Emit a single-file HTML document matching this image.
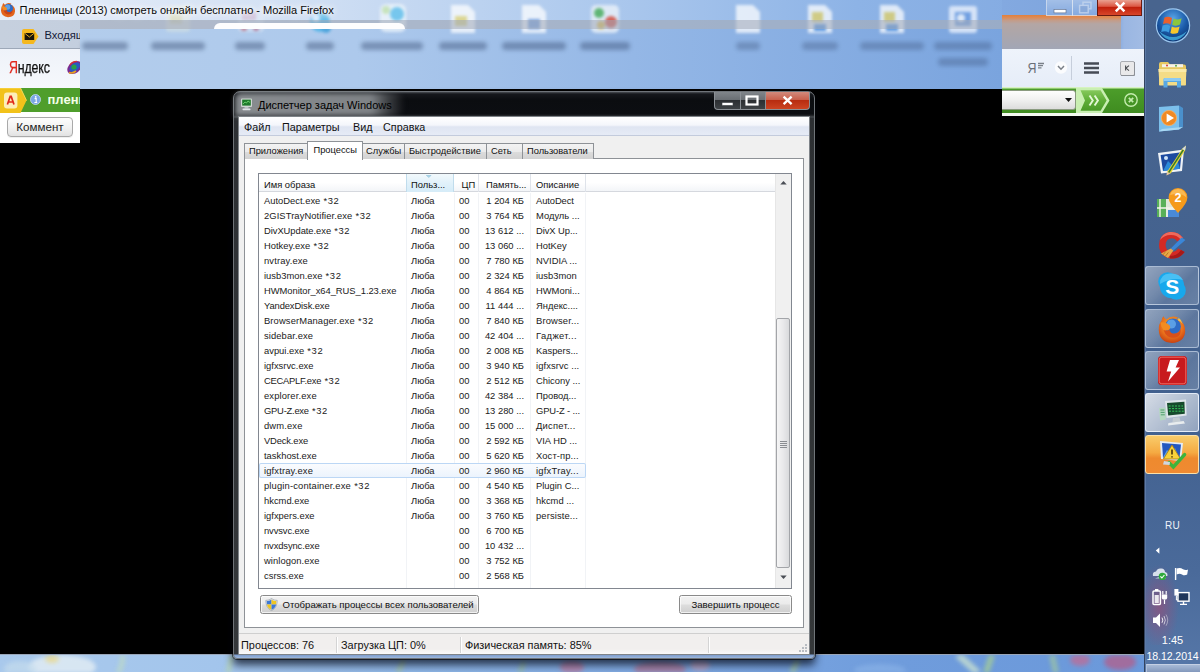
<!DOCTYPE html>
<html lang="ru">
<head>
<meta charset="utf-8">
<title>Диспетчер задач Windows</title>
<style>
*{box-sizing:border-box;margin:0;padding:0}
html,body{width:1200px;height:672px;overflow:hidden;background:#000}
body{position:relative;font-family:"Liberation Sans",sans-serif;font-size:10px;color:#111}
.abs{position:absolute}
/* ---------- desktop / wallpaper ---------- */
#wall{left:0;top:654px;width:1200px;height:18px;background:linear-gradient(90deg,#a9c9ec 0%,#a3c5ec 18%,#8fb7e8 35%,#7fa9e2 55%,#6f9cdc 75%,#6a98da 100%);border-top:1px solid #9aa6b8;overflow:hidden}
/* ---------- firefox ---------- */
#ffTitle{left:0;top:0;width:1143px;height:20px;background:linear-gradient(90deg,#e6eef9 0%,#d3e1f4 25%,#b0cbee 50%,#8db3e6 75%,#7ea6df 100%)}
#ffTabs{left:0;top:20px;width:1143px;height:29px;background:linear-gradient(90deg,#c6d0de 0%,#bccbe0 30%,#a3bcdd 60%,#89a9d6 100%)}
#ffNavL{left:0;top:49px;width:80px;height:39px;background:linear-gradient(180deg,#eef2f9,#f6f8fc)}
#ffGreenL{left:0;top:88px;width:80px;height:24px;background:#4f9e2c}
#ffBodyL{left:0;top:112px;width:80px;height:31px;background:#fff}
#glass{left:80px;top:29px;width:922px;height:60px;background:linear-gradient(90deg,#b3cdec 0%,#adc9ec 30%,#94b7e6 60%,#7aa4de 100%)}
/* ---------- firefox details ---------- */
#ffText{left:19.5px;top:3px;text-shadow:0 0 5px #fff,0 0 9px #fff,0 0 12px #fff;font-size:11.1px;line-height:14px;color:#0a0a0a;white-space:nowrap;letter-spacing:-.05px}
#ffTabLine{left:0;top:48px;width:80px;height:1px;background:#9da8b8}
#tabTxt{left:44.5px;top:27px;width:35.5px;overflow:hidden;font-size:11.2px;line-height:16px;color:#152038;white-space:nowrap}
#actTab{left:214px;top:23px;width:191px;height:6px;border-radius:8px 8px 0 0;background:#fdfdfe}
#ydx{left:9px;top:57px;font-size:16.5px;line-height:20px;color:#111;white-space:nowrap;transform:scaleX(.75);transform-origin:0 0;letter-spacing:-.2px;-webkit-text-stroke:.25px currentColor}
#ydx b{font-weight:normal;color:#e0261c}
#greenTxt{left:47.5px;top:91px;width:32.5px;overflow:hidden;font-size:13px;font-weight:bold;line-height:18px;color:#f4ffe8;white-space:nowrap}
#komm{left:7px;top:117px;width:66px;height:20px;border:1px solid #a9a9a9;border-radius:4px;background:linear-gradient(180deg,#fdfdfd 0%,#f1f1f1 55%,#e2e2e2 100%);font-size:11.6px;line-height:18px;text-align:center;color:#1c1c1c;box-shadow:0 1px 0 rgba(0,0,0,.06)}
.dlabel{height:8px;border-radius:4px;background:rgba(50,72,110,.42);filter:blur(2.2px)}
.dicon{filter:blur(1.8px);opacity:.9}
#ffRtop{left:1002px;top:0;width:142px;height:49px;background:linear-gradient(90deg,#83a9e0 0%,#7ca3dc 80%,#9ab6e2 86%,#a2bce4 100%)}
#ffRblur{left:1002px;top:15px;width:119px;height:34px;background:linear-gradient(180deg,#e2803c 0%,#dc8c58 8%,#c49c88 16%,#b4a6a4 26%,#aca6aa 55%,#a2a6b6 100%)}
#ffRnav{left:1002px;top:49px;width:142px;height:38px;background:linear-gradient(180deg,#eef3fb,#e6edf8)}
#ffRgreen{left:1002px;top:87px;width:142px;height:26px;background:linear-gradient(180deg,#d6f3c0 0px,#d6f3c0 1px,#4c9d2a 2px,#3f8c20 100%)}
#ffRwhite{left:1002px;top:113px;width:142px;height:3px;background:#f4faf0}
.fcap{top:0;height:16px;border:1px solid rgba(215,225,240,.7);border-top:none}
/* ---------- taskbar ---------- */
#taskbar{left:1145px;top:0;width:55px;height:672px;background:linear-gradient(180deg,#48648e 0%,#45638f 30%,#41608e 60%,#4a6a9a 85%,#5677a8 100%);border-left:1px solid #5c7aa6;box-shadow:-1px 0 0 #33435f}
.tbtn{left:1145px;width:54px;height:39px;border:1px solid rgba(214,226,244,.6);border-radius:3px;background:linear-gradient(135deg,rgba(255,255,255,.42) 0%,rgba(255,255,255,.26) 40%,rgba(255,255,255,.14) 60%,rgba(255,255,255,.2) 100%)}
.tbtn.hot{background:linear-gradient(180deg,#f9cc6a 0%,#f5aa42 45%,#ee8a2e 60%,#ef8a32 100%);border-color:#fbe0a8}
#tray{left:1145px;top:515px;width:55px;color:#fff;text-align:center;white-space:nowrap}
/* ---------- task manager ---------- */
#tm{left:233px;top:91px;width:582px;height:568px;border-radius:7px 7px 4px 4px;border:1px solid #6f7479;
 background:linear-gradient(180deg,#4a4e53 0px,#16181c 2px,#0b0d10 8px,#0c0e12 22px,#2a2d31 24px,#4a4e53 25px,#2c2f33 26px,#34373a 562px,#7d9ccc 563px,#9cb8de 566px,#86a4d0 568px);box-shadow:0 0 0 1px rgba(0,0,0,.55),0 6px 9px 0 rgba(0,5,20,.72)}
#tmGlow{left:235px;top:93px;width:170px;height:23px;background:linear-gradient(90deg,rgba(150,154,158,.9) 0%,rgba(140,144,148,.9) 80%,rgba(110,113,117,.5) 90%,rgba(0,0,0,0) 100%);border-radius:6px 10px 10px 0;filter:blur(2.5px)}
#tmTitle{left:258px;top:97px;font-size:11px;line-height:16px;color:#000;white-space:nowrap}
#tmIcon{left:240px;top:98px;width:14px;height:13px}
.cap{top:92px;height:18px;border:1px solid #8b9095;border-top:none}
#capMin{left:714px;width:27px;border-radius:0 0 0 4px;background:linear-gradient(180deg,#80858a 0%,#6a6f74 45%,#2c2f32 50%,#3e4245 100%)}
#capMax{left:740px;width:26px;background:linear-gradient(180deg,#80858a 0%,#6a6f74 45%,#2c2f32 50%,#3e4245 100%)}
#capClose{left:765px;width:45px;border-radius:0 0 4px 0;background:linear-gradient(180deg,#d28a7c 0%,#c8604c 45%,#b82c10 50%,#cc4422 100%)}
#tmClient{left:239px;top:117px;width:570px;height:537px;background:#f0f0f0;outline:1px solid #7f8489}
#tmMenu{left:239px;top:117px;width:570px;height:19px;background:linear-gradient(180deg,#ffffff 0%,#f4f6fb 45%,#dfe5f2 55%,#e6ebf6 100%);border-bottom:1px solid #c3cbdc;font-size:10.8px;line-height:19px;color:#111}
#tmMenu span{position:absolute;top:0.5px;white-space:nowrap}
.tab{top:143px;height:16px;border:1px solid #8e9297;border-bottom:none;background:linear-gradient(180deg,#f3f3f3 0%,#ebebeb 50%,#dddddd 51%,#d2d2d2 100%);font-size:9.3px;line-height:15px;text-align:left;padding-left:4px;white-space:nowrap;color:#111}
.tab.act{top:141px;height:19px;background:#fff;z-index:3;line-height:17px;padding-left:5.5px}
#tmPanel{left:244px;top:158px;width:560px;height:470px;background:#fff;border:1px solid #8e9297}
#list{left:258px;top:173px;width:534px;height:416px;background:#fff;border:1px solid #828790}
#hdr{left:259px;top:174px;width:516px;height:18px;background:linear-gradient(180deg,#ffffff 0%,#ffffff 50%,#f3f5f8 100%);border-bottom:1px solid #d5d8de;font-size:9.4px;line-height:18px}
#hdr span{position:absolute;top:1.5px;white-space:nowrap}
#hdrSort{left:406px;top:174px;width:48px;height:18px;background:linear-gradient(180deg,#f2f9fc 0%,#e1f1fa 50%,#d5ecf8 100%);border-left:1px solid #c0dcec;border-right:1px solid #c0dcec}
.hsep{top:174px;width:1px;height:18px;background:#dfe3ea}
.csep{top:193px;width:1px;height:395px;background:#f1f3f6}
#rows{left:259px;top:193px;width:516px;font-size:9.4px;line-height:15px;color:#1a1a1a}
.row{position:relative;height:15px;white-space:nowrap}
.row span{position:absolute;top:0}
.row .c1{left:5px}.row .c2{left:152px}.row .c3{left:200px}.row .c4{left:215px;width:50px;text-align:right}.row .c5{left:277px}
.row .w{position:static;margin-left:0;letter-spacing:.6px}
.row.sel{background:linear-gradient(180deg,#fbfcfe,#ebf3fd);box-shadow:inset 0 0 0 1px #bcd7f5;width:327px;border-radius:2px}
#sb{left:775px;top:174px;width:16px;height:414px;background:#f0f0f0;border-left:1px solid #e6e6e6}
#sbThumb{left:776px;top:318px;width:14px;height:250px;border:1px solid #a3a5a9;border-radius:2px;background:linear-gradient(90deg,#f5f5f5 0%,#e9e9eb 50%,#d9dadc 100%)}
.btn{top:595px;height:19px;border:1px solid #8a8a8a;border-radius:2.5px;background:linear-gradient(180deg,#f2f2f2 0%,#ebebeb 48%,#dddddd 52%,#cfcfcf 100%);box-shadow:inset 0 0 0 1px rgba(255,255,255,.7);font-size:9.6px;line-height:17px;white-space:nowrap;color:#111}
#status{left:239px;top:633px;width:570px;height:21px;background:linear-gradient(180deg,#f1efee 0%,#f1efee 75%,#fafafa 100%);border-top:1px solid #cfcfcf;font-size:10.9px;line-height:19px;color:#111}
#status span{position:absolute;top:1.5px;white-space:nowrap}
.ssep{top:637px;width:1px;height:16px;background:#d4d4d4;box-shadow:1px 0 0 #fff}
</style>
</head>
<body>
<div id="wall" class="abs"><svg width="1200" height="18" viewBox="0 0 1200 18" style="filter:blur(2.2px)">
<ellipse cx="62" cy="12" rx="34" ry="12" fill="#e4eef4" opacity=".8"/><ellipse cx="52" cy="4" rx="7" ry="4" fill="#e8d890" opacity=".8"/><ellipse cx="20" cy="14" rx="16" ry="8" fill="#c4dcec" opacity=".7"/>
<path d="M118 18 Q124 8 122 0" stroke="#bcd8c8" stroke-width="5" fill="none" opacity=".8"/><path d="M228 18 L232 0" stroke="#b8d6b0" stroke-width="5" opacity=".7"/>
<path d="M398 18 L404 4" stroke="#a8c8a0" stroke-width="5" opacity=".7"/><path d="M520 18 L524 6" stroke="#9cc0a0" stroke-width="5" opacity=".7"/>
<ellipse cx="572" cy="12" rx="12" ry="7" fill="#c07a9c" opacity=".7"/><ellipse cx="660" cy="14" rx="26" ry="8" fill="#b8708c" opacity=".65"/><ellipse cx="700" cy="10" rx="10" ry="6" fill="#d4a4b8" opacity=".6"/>
<path d="M792 18 L798 4" stroke="#a4c8a0" stroke-width="6" opacity=".7"/><ellipse cx="880" cy="15" rx="26" ry="6" fill="#8cb4e8" opacity=".6"/>
<path d="M958 0 L978 18" stroke="#c8e0d0" stroke-width="7" opacity=".8"/><path d="M992 0 L986 18" stroke="#a4cc98" stroke-width="6" opacity=".8"/><path d="M1052 0 L1056 18" stroke="#a0c8a0" stroke-width="6" opacity=".7"/>
<ellipse cx="1080" cy="5" rx="10" ry="6" fill="#c46890" opacity=".7"/><ellipse cx="1120" cy="7" rx="16" ry="8" fill="#b85a84" opacity=".7"/>
</svg></div>
<div id="ffTitle" class="abs"></div>
<div id="ffTabs" class="abs"></div>
<div id="ffNavL" class="abs"></div>
<div id="ffGreenL" class="abs"></div>
<div id="ffBodyL" class="abs"></div>
<div id="glass" class="abs"></div>
<!--GLASS-->
<div class="abs dicon" style="left:0;top:0;width:1002px;height:40px;overflow:hidden">
<svg width="1002" height="40" viewBox="0 0 1002 40">
<g opacity=".35"><rect x="166" y="6" width="24" height="26" rx="3" fill="#f4f3d8"/><rect x="170" y="14" width="12" height="10" fill="#e8d46a"/></g>
<g opacity=".5"><rect x="238" y="8" width="26" height="24" rx="4" fill="#e8eef8"/><circle cx="244" cy="28" r="3" fill="#d03030"/><circle cx="256" cy="28" r="3" fill="#c03048"/><rect x="242" y="12" width="14" height="8" fill="#d0a0c0"/></g>
<g opacity=".8"><circle cx="320" cy="22" r="10" fill="#38b0e8"/><circle cx="316" cy="18" r="4" fill="#d8f0ff"/><circle cx="326" cy="28" r="5" fill="#2a98d8"/></g>
<g opacity=".8"><rect x="380" y="4" width="26" height="28" rx="6" fill="#f2f8fc"/><circle cx="397" cy="14" r="7" fill="#58c0ec"/><circle cx="386" cy="10" r="4" fill="#c8e8a8"/></g>
<g opacity=".8"><path d="M451 5 H468 L475 12 V33 H451Z" fill="#ffffff"/><rect x="455" y="16" width="12" height="10" fill="#e8d870"/><path d="M522 5 H539 L546 12 V33 H522Z" fill="#ffffff"/><rect x="528" y="19" width="12" height="10" fill="#6a98dc"/></g>
<g opacity=".85"><rect x="591" y="5" width="28" height="28" rx="5" fill="#eef4fa"/><circle cx="599" cy="13" r="5" fill="#48b050"/><circle cx="611" cy="22" r="6" fill="#e04830"/><circle cx="601" cy="25" r="4" fill="#f0c030"/></g>
<g opacity=".8"><path d="M736 5 H753 L760 12 V33 H736Z" fill="#ffffff"/><path d="M808 5 H825 L832 12 V33 H808Z" fill="#ffffff"/><rect x="812" y="12" width="11" height="10" fill="#e8d460"/><rect x="814" y="24" width="12" height="7" fill="#4a90e0"/><path d="M880 5 H897 L904 12 V33 H880Z" fill="#ffffff"/><rect x="884" y="12" width="11" height="10" fill="#e8d460"/><rect x="886" y="24" width="12" height="7" fill="#4a90e0"/><rect x="949" y="6" width="28" height="27" rx="3" fill="#f4f8ff"/><rect x="955" y="12" width="16" height="14" fill="#6a9ae0"/><circle cx="961" cy="18" r="4" fill="#ffffff"/></g>
</svg></div>
<div class="abs" style="left:80px;top:20px;width:922px;height:9px;background:rgba(160,170,186,.55)"></div>
<div class="abs dlabel" style="left:82px;top:42px;width:46px;opacity:1"></div>
<div class="abs dlabel" style="left:151px;top:42px;width:54px;opacity:1"></div>
<div class="abs dlabel" style="left:235px;top:42px;width:30px;opacity:1"></div>
<div class="abs dlabel" style="left:306px;top:42px;width:28px;opacity:1"></div>
<div class="abs dlabel" style="left:361px;top:42px;width:62px;opacity:1"></div>
<div class="abs dlabel" style="left:439px;top:42px;width:48px;opacity:1"></div>
<div class="abs dlabel" style="left:502px;top:42px;width:64px;opacity:1"></div>
<div class="abs dlabel" style="left:580px;top:42px;width:50px;opacity:1"></div>
<div class="abs dlabel" style="left:736px;top:42px;width:24px;opacity:0.75"></div>
<div class="abs dlabel" style="left:802px;top:42px;width:36px;opacity:0.75"></div>
<div class="abs dlabel" style="left:860px;top:42px;width:64px;opacity:0.75"></div>
<div class="abs dlabel" style="left:934px;top:42px;width:58px;opacity:0.75"></div>
<div class="abs dlabel" style="left:938px;top:58px;width:50px;opacity:.75"></div>
<!--/GLASS-->

<!--FF-->
<div id="ffText" class="abs">Пленницы (2013) смотреть онлайн бесплатно - Mozilla Firefox</div>
<svg class="abs" style="left:0;top:1px" width="16" height="17" viewBox="0 0 30 31"><path d="M6.4 3.2 Q7.6 5.6 9.4 6.4 Q14.6 1.4 21.6 4.8 Q20 4.8 19.4 5.6 Q28.6 9.2 28.2 18.6 Q27.4 29.6 15 30 Q2.6 29.6 1.8 17.6 Q1.4 11 4.6 7.6 Q4.8 5 6.4 3.2Z" fill="#e2641c"/><circle cx="16" cy="13.4" r="8.4" fill="#2f6cc6"/><circle cx="14.4" cy="11" r="4.8" fill="#5b9fe6"/><path d="M3.4 9.6 Q8 8.6 11.6 11.6 Q14.4 13.6 12.4 16.4 Q10 18.4 6.6 17 Q3.8 14 3.4 9.6Z" fill="#f28c22"/><path d="M12.4 16.4 Q13 20.6 18 20.6 Q22.4 20 23.4 16 Q24.6 20.6 21 23.4 Q16 26 11 23.4 Q7.6 21 6.6 17 Q10 18.4 12.4 16.4Z" fill="#c8441a"/></svg>
<div id="ffTabLine" class="abs"></div>
<svg class="abs" style="left:21px;top:28px" width="19" height="17" viewBox="0 0 19 17"><path d="M3 1 H12.5 L17.5 8.5 L12.5 16 H3 Q1 16 1 14 V3 Q1 1 3 1Z" fill="#f5b81e"/><rect x="3.6" y="5" width="9.6" height="7" fill="#1a1408"/><path d="M3.8 5.3 L8.4 9 L13 5.3" stroke="#f5b81e" stroke-width=".9" fill="none"/></svg>
<div id="tabTxt" class="abs">Входящие</div>
<div id="actTab" class="abs"></div>
<div id="ydx" class="abs"><b>Я</b>ндекс</div>
<svg class="abs" style="left:66px;top:59px" width="14" height="17" viewBox="0 0 14 17"><ellipse cx="8.5" cy="8.5" rx="8" ry="5.6" transform="rotate(-38 8.5 8.5)" fill="#7a2a90"/><ellipse cx="8.8" cy="8.2" rx="6" ry="3.8" transform="rotate(-38 8.8 8.2)" fill="#2a58c0"/><circle cx="8" cy="8" r="2.6" fill="#28a04a"/><path d="M3 13.5 Q6 15 10 12" stroke="#e8a020" stroke-width="1.6" fill="none"/><path d="M4 6 Q6 2.6 11 2.4" stroke="#d83030" stroke-width="1.4" fill="none"/></svg>
<svg class="abs" style="left:0;top:88px" width="29" height="25" viewBox="0 0 29 25"><path d="M0 0 H20.5 L26.5 12.5 L20.5 25 H0Z" fill="#f2c21a"/><path d="M0 0 H20.5 L26.5 12.5" fill="none" stroke="#f7d95a" stroke-width="1"/><rect x="4" y="4.4" width="13.4" height="16.2" rx="3" fill="#fdeeb8"/><path d="M7.4 16.6 L10.2 8.4 H11.2 L14 16.6 M8.4 14 H13" stroke="#e0281a" stroke-width="1.7" fill="none"/></svg>
<svg class="abs" style="left:30px;top:94px" width="11" height="11" viewBox="0 0 11 11"><circle cx="5.5" cy="5.5" r="5" fill="#7aa6e4" stroke="#c9dcf6" stroke-width=".8"/><circle cx="5.7" cy="2.9" r=".9" fill="#fff"/><path d="M4.6 4.6 H6.2 V8.4 M4.4 8.5 H7.2" stroke="#fff" stroke-width="1.1" fill="none"/></svg>
<div id="greenTxt" class="abs">пленницы</div>
<div id="komm" class="abs">Коммент</div>
<!--/FF-->


<!--FFR-->
<div id="ffRtop" class="abs"></div>
<div id="ffRblur" class="abs"></div>
<div class="abs fcap" style="left:1046px;width:27px;background:linear-gradient(180deg,rgba(255,255,255,.28),rgba(255,255,255,.05))"></div>
<div class="abs fcap" style="left:1072px;width:26px;background:linear-gradient(180deg,rgba(255,255,255,.28),rgba(255,255,255,.05))"></div>
<div class="abs fcap" style="left:1097px;width:45px;border-color:#6a1a10;background:linear-gradient(180deg,#e9a090 0%,#dc5844 42%,#c0200c 50%,#d8462a 100%)"></div>
<svg class="abs" style="left:1046px;top:0" width="96" height="16" viewBox="0 0 96 16"><rect x="8" y="9.5" width="12" height="3.4" fill="#fff" stroke="#5a6a88" stroke-width=".6"/><g opacity=".8"><rect x="37" y="2.2" width="8" height="6.6" fill="none" stroke="#c6d6ee" stroke-width="1.4"/><rect x="33.6" y="5.4" width="8.6" height="7.4" fill="#88a8d8" stroke="#c6d6ee" stroke-width="1.4"/></g><path d="M69.8 2.6 L78.4 11.4 M78.4 2.6 L69.8 11.4" stroke="#fff" stroke-width="2.5"/></svg>
<div id="ffRnav" class="abs"></div>
<svg class="abs" style="left:1024px;top:56px" width="116" height="24" viewBox="0 0 116 24"><text x="3.5" y="17" font-family="Liberation Sans, sans-serif" font-size="14.5" fill="#6a6f78" textLength="9" lengthAdjust="spacingAndGlyphs">Я</text><path d="M14 7.5 H20 M14 9.7 H19 M14 11.9 H17.5" stroke="#7a8088" stroke-width="1.3"/><circle cx="37" cy="11.5" r="6.2" fill="#fbfcfe"/><path d="M34 10 L37 13.2 L40 10" stroke="#7a8088" stroke-width="1.5" fill="none"/><path d="M47.5 0 V24" stroke="#c6cedb" stroke-width="1"/><path d="M60 7.5 H75 M60 12 H75 M60 16.5 H75" stroke="#464b55" stroke-width="2.4"/><rect x="96.5" y="5.5" width="14" height="14" rx="1.5" fill="#e9e9ea" stroke="#a9acb2"/><path d="M97 19.5 H110.5 V6" stroke="#8c9096" stroke-width="1" fill="none"/><path d="M101.6 9.6 V14.6 M105 9.6 L102 12.1 L105 14.6" stroke="#4a4d52" stroke-width="1.1" fill="none"/></svg>
<div id="ffRgreen" class="abs"></div>
<div id="ffRwhite" class="abs"></div>
<div class="abs" style="left:1002px;top:90px;width:74px;height:20px;border:1px solid #8a9a80;border-left:none;border-radius:0 3px 3px 0;background:linear-gradient(180deg,#fefefe 0%,#f0f0f0 50%,#dcdcdc 100%)"></div>
<div class="abs" style="left:1076px;top:88px;width:8px;height:24px;background:#c9efb2"></div>
<svg class="abs" style="left:1062px;top:88px" width="82" height="25" viewBox="0 0 82 25"><defs><linearGradient id="ga" x1="0" y1="0" x2="0" y2="1"><stop offset="0" stop-color="#86c95c"/><stop offset=".5" stop-color="#5fae38"/><stop offset="1" stop-color="#4a9a28"/></linearGradient></defs><path d="M3 10 H10 L6.5 14Z" fill="#111"/><path d="M14 0 H40 L47.5 12.5 L40 25 H14Z" fill="#c9efb2"/><path d="M18.5 2.2 H38.6 L44.6 12.5 L38.6 22.8 H18.5 L23 12.5Z" fill="url(#ga)"/><path d="M27.5 7.5 L30.8 12.5 L27.5 17.5 M32.6 7.5 L35.9 12.5 L32.6 17.5" stroke="#e4f8d6" stroke-width="1.9" fill="none"/><circle cx="69" cy="12" r="6.2" fill="none" stroke="#c4ecae" stroke-width="1.4"/><path d="M66.8 9.8 L71.2 14.2 M71.2 9.8 L66.8 14.2" stroke="#c4ecae" stroke-width="1.7"/></svg>
<!--/FFR-->
<div id="taskbar" class="abs"></div>
<!--TB-->
<div class="abs" style="left:1145px;top:560px;width:40px;height:85px;background:radial-gradient(ellipse 50% 50% at 35% 55%,rgba(170,70,110,.55),rgba(170,70,110,0) 100%)"></div>
<svg class="abs" style="left:1154px;top:7px" width="38" height="38" viewBox="0 0 38 38"><defs><radialGradient id="orb" cx=".5" cy=".3" r=".75"><stop offset="0" stop-color="#5aa6e8"/><stop offset=".55" stop-color="#1a5aa8"/><stop offset="1" stop-color="#0c2c66"/></radialGradient></defs><circle cx="19" cy="18.5" r="16.6" fill="url(#orb)" stroke="#9cc8f0" stroke-width="1.2"/><path d="M5 24 Q19 36 33 24 Q28 33 19 33.6 Q10 33 5 24Z" fill="#4cc0f0" opacity=".7"/><path d="M10.5 10.5 Q14 8.6 18 11 L16.6 17.4 Q13 15.4 9 17Z" fill="#e8602c"/><path d="M19.6 11.6 Q23.6 13.6 27.6 11.2 L26 17.6 Q22 19.8 18.2 17.8Z" fill="#8cc63c"/><path d="M8.6 18.6 Q12.6 16.8 16.2 19 L14.8 25.4 Q11.4 23.4 7.2 25Z" fill="#3c9ce0"/><path d="M17.8 19.6 Q21.6 21.6 25.6 19.4 L24 25.8 Q20.2 27.8 16.4 26Z" fill="#f8c62c"/></svg>
<svg class="abs" style="left:1157px;top:60px" width="32" height="30" viewBox="0 0 32 30"><path d="M2 4 Q2 2 4 2 H11 L13 4.5 H27 Q29 4.5 29 6.5 V25 H2Z" fill="#e8c860"/><rect x="5" y="4.2" width="21" height="3" fill="#f6f2e6"/><circle cx="10" cy="5.6" r="1" fill="#d84030"/><circle cx="19" cy="5.8" r="1" fill="#58a848"/><path d="M1.5 9 H29.5 L28.6 25.6 H2.4Z" fill="#f4dc86"/><path d="M1.5 9 H29.5 L29.3 12 H1.7Z" fill="#f9e9a8"/><path d="M6.5 27.5 V19.5 Q6.5 18 8 18 H22.5 Q24 18 24 19.5 V27.5 H20 V22 H10.5 V27.5Z" fill="#58a8e4"/><path d="M6.5 19.5 Q6.5 18 8 18 H22.5 Q24 18 24 19.5 V21 H6.5Z" fill="#8ccaf2"/></svg>
<svg class="abs" style="left:1157px;top:104px" width="28" height="30" viewBox="0 0 28 30"><path d="M2 3 L22 1.5 V25.5 L2 27.5Z" fill="#7cc0ec"/><path d="M22 1.5 L26 4 V23 L22 25.5Z" fill="#4a90cc"/><path d="M2 27.5 L22 25.5 L26 23 L5 25Z" fill="#a8d8f4"/><circle cx="12" cy="14" r="7.6" fill="#f08a24"/><circle cx="12" cy="14" r="7.6" fill="none" stroke="#f8b060" stroke-width=".8"/><path d="M9.6 9.6 L17 14 L9.6 18.4Z" fill="#fff"/></svg>
<svg class="abs" style="left:1156px;top:143px" width="34" height="34" viewBox="0 0 34 34"><path d="M2 10 L28 6.5 L26 28 L5 30.5Z" fill="#eef2f6"/><path d="M4.6 12 L25.6 9.2 L24 25.8 L7 28Z" fill="#1c4aa0"/><path d="M7 28 L12 18 L17 23 L21 16 L24 25.8Z" fill="#2c8ad8"/><circle cx="10" cy="15" r="2" fill="#cfe4f8"/><path d="M11 29 L26 6 L30 2.4 L29 7.6 L14.6 30.6Z" fill="#e8d838"/><path d="M12.6 29.6 L27.4 6.6" stroke="#3a7a2c" stroke-width="1.6"/><path d="M26 6 L30 2.4 L29 7.6Z" fill="#d8dce2"/><path d="M11 29 L10.4 32.6 L14.6 30.6Z" fill="#e8c8a0"/></svg>
<svg class="abs" style="left:1155px;top:186px" width="36" height="34" viewBox="0 0 36 34"><rect x="2" y="13" width="22" height="18" fill="#e8ece4"/><rect x="2" y="13" width="9" height="18" fill="#58b058"/><path d="M11 13 H24 V22 H11Z" fill="#dfe6d8"/><path d="M5 13 V31 M2 22 H24" stroke="#f4f4ea" stroke-width="1.4"/><path d="M13 24 H24 V31 H13Z" fill="#4a8ad8"/><path d="M23 2 A9.4 9.4 0 0 1 32.4 11.4 Q32.4 17 23 27 Q13.6 17 13.6 11.4 A9.4 9.4 0 0 1 23 2Z" fill="#f59a1c"/><path d="M23 3 A8.4 8.4 0 0 1 31.4 11.4 Q26 6 15 9 A8.4 8.4 0 0 1 23 3Z" fill="#fbc060" opacity=".8"/><text x="19.6" y="16" font-family="Liberation Sans, sans-serif" font-size="12.5" font-weight="bold" fill="#fff">2</text></svg>
<svg class="abs" style="left:1156px;top:229px" width="32" height="32" viewBox="0 0 32 32"><path d="M27 9 Q22 2 13.6 3 Q3 5 3 16 Q3 27 14 29.4 Q23 30.6 28.6 23 L22.4 19.6 Q19 24 14.4 22.6 Q9.4 21 9.6 15.6 Q10 10 15 9.4 Q19 9 21.4 12.4Z" fill="#d42a24"/><path d="M27 9 Q22 2 13.6 3 Q6 4.4 4 11 Q9 5.6 15 6 Q21 6 24.6 10.4Z" fill="#ee6a5c"/><path d="M14 29.4 Q23 30.6 28.6 23 L25 21 Q21 27 14 27Z" fill="#a81a18"/><path d="M25.6 8.6 L29.4 11 L17.4 21.4 L14.8 19.4Z" fill="#3a86d8"/><path d="M14.8 19.4 L17.4 21.4 L12 29 L5 24.6Z" fill="#e8a848"/><path d="M7 25.8 L9.8 22.4 M9.4 27.2 L12.4 23.4" stroke="#b87420" stroke-width=".9"/></svg>
<div class="abs tbtn" style="top:266px"></div>
<div class="abs tbtn" style="top:309px"></div>
<div class="abs tbtn" style="top:351px"></div>
<div class="abs tbtn" style="top:393px;background:linear-gradient(135deg,rgba(255,255,255,.78) 0%,rgba(255,255,255,.62) 45%,rgba(255,255,255,.42) 100%);border-color:rgba(235,242,252,.9)"></div>
<div class="abs tbtn hot" style="top:435px"></div>
<svg class="abs" style="left:1157px;top:271px" width="30" height="30" viewBox="0 0 30 30"><circle cx="10.6" cy="10.6" r="9.4" fill="#18a8ec"/><circle cx="19.4" cy="19.4" r="9.4" fill="#18a8ec"/><circle cx="15" cy="15" r="12.2" fill="#18a8ec"/><path d="M3 13 Q3 3 13 2.6 Q22 2 26 9 Q15 6 3 13Z" fill="#5ccaf8" opacity=".7"/><text x="8.2" y="22.6" font-family="Liberation Sans, sans-serif" font-size="21" font-weight="bold" fill="#fff">S</text></svg>
<svg class="abs" style="left:1157px;top:313px" width="30" height="31" viewBox="0 0 30 31"><defs><radialGradient id="fx" cx=".5" cy=".35" r=".7"><stop offset="0" stop-color="#f8b02c"/><stop offset=".6" stop-color="#e8701c"/><stop offset="1" stop-color="#c2380e"/></radialGradient></defs><path d="M6.4 3.2 Q7.6 5.6 9.4 6.4 Q14.6 1.4 21.6 4.8 Q20 4.8 19.4 5.6 Q28.6 9.2 28.2 18.6 Q27.4 29.6 15 30 Q2.6 29.6 1.8 17.6 Q1.4 11 4.6 7.6 Q4.8 5 6.4 3.2Z" fill="url(#fx)"/><circle cx="16" cy="13.4" r="7.9" fill="#2f6cc6"/><circle cx="14.4" cy="11" r="4.6" fill="#5b9fe6"/><path d="M3.4 9.6 Q8 8.6 11.6 11.6 Q14.4 13.6 12.4 16.4 Q10 18.4 6.6 17 Q3.8 14 3.4 9.6Z" fill="#f28c22"/><path d="M12.4 16.4 Q13 20.6 18 20.6 Q22.4 20 23.4 16 Q24.6 20.6 21 23.4 Q16 26 11 23.4 Q7.6 21 6.6 17 Q10 18.4 12.4 16.4Z" fill="#d8501a"/><path d="M21.6 4.8 Q25 7 25.6 11 Q24 8 21 7.4Z" fill="#f6c244"/></svg>
<svg class="abs" style="left:1157px;top:355px" width="31" height="31" viewBox="0 0 31 31"><rect x="1" y="1" width="29" height="29" rx="3.5" fill="#c81a1e"/><rect x="2.2" y="2.2" width="26.6" height="26.6" rx="2.6" fill="none" stroke="#ee6a60" stroke-width="1"/><path d="M13 5 H22 L18.6 12.4 H23 L11 26.4 L14.2 16.4 H9.6Z" fill="#fff"/></svg>
<svg class="abs" style="left:1156px;top:396px" width="34" height="32" viewBox="0 0 34 32"><path d="M9 5 L30 3.6 L30.6 19.6 L10.6 22Z" fill="#dfe6ea"/><path d="M11 7 L28.4 5.8 L28.8 17.8 L12.2 19.6Z" fill="#174a2c"/><path d="M12.6 10 H27 M12.8 12.6 H27.4 M13 15.2 H27.8" stroke="#3cd060" stroke-width=".9" stroke-dasharray="2 1.2"/><path d="M17 22 L23.4 21.2 L24.6 25.6 L16.4 26.6Z" fill="#c4ccd2"/><path d="M12.4 27 L27.6 25 L29 27.6 L12 29.6Z" fill="#e8ecee"/><path d="M3 12 L9.4 11.4 L9.8 23.6 L4 24.4Z" fill="#b4d8c0"/><path d="M4.4 14 H8.4 M4.6 16.4 H8.6 M4.8 18.8 H8.8" stroke="#4a9a68" stroke-width=".9"/></svg>
<svg class="abs" style="left:1156px;top:437px" width="34" height="34" viewBox="0 0 34 34"><path d="M4 4 L27 6 L25 24 L5 22Z" fill="#e4ecf6"/><path d="M6 6 L25 7.6 L23.4 22 L7 20.4Z" fill="#2458c0"/><path d="M7 20.4 L11 13 L15.6 17.6 L19 11 L23.4 22Z" fill="#58a4ec"/><path d="M16 8 L24.6 22 H7.4Z" fill="#f8d23a" stroke="#a87a10" stroke-width=".8"/><path d="M16 12.4 V17.6 M16 19.2 V20.6" stroke="#3a2a08" stroke-width="1.5"/><path d="M13 25.6 L17.4 30 L28.6 17.6" stroke="#3cb43c" stroke-width="3.4" fill="none" stroke-linecap="round"/><path d="M8 24 L14 25 L13.6 28 L7 27.4Z" fill="#cfd6de"/></svg>
<div id="tray" class="abs"><div style="font-size:10px;line-height:21px;letter-spacing:.2px;color:#eef2f8">RU</div></div>
<svg class="abs" style="left:1150px;top:544px" width="42" height="86" viewBox="0 0 42 86"><path d="M9.4 3.4 V9.8 L5.8 6.6Z" fill="#fff"/>
<path d="M3 32 Q2 28 6 27.6 Q7.6 23.6 11.6 24.6 Q14.6 25 15 28 Q18 28.4 17.4 32Z" fill="#e6edf4" opacity=".9"/><path d="M5 34.6 L14 31 L16 34.6Z" fill="#dfe6ee" opacity=".8"/><circle cx="12.4" cy="32.4" r="3.7" fill="#2eaa3c"/><path d="M10.4 32.4 L11.9 34 L14.4 31" stroke="#fff" stroke-width="1.1" fill="none"/>
<path d="M25.6 24 V36" stroke="#fff" stroke-width="1.4"/><path d="M26.6 24.6 Q30 23 33 25.2 Q35.6 26.6 38 25.4 L37.2 30.6 Q34.4 32 32 30.4 Q29.4 29 26.6 30.6Z" fill="#fff"/>
<rect x="3" y="47" width="7.4" height="13.6" rx="1" fill="none" stroke="#fff" stroke-width="1.5"/><rect x="5" y="45" width="3.4" height="2" fill="#fff"/><rect x="4.6" y="51" width="4.2" height="8" fill="#fff" opacity=".85"/><path d="M12.8 47 V50.6 M16.2 47 V50.6" stroke="#fff" stroke-width="1.2"/><path d="M11.8 50.6 H17.2 V53.4 Q17.2 55.6 14.5 55.6 Q11.8 55.6 11.8 53.4Z" fill="#fff"/><path d="M14.5 55.6 V60" stroke="#fff" stroke-width="1.2"/>
<rect x="28" y="48.6" width="11" height="8.6" fill="#20365a" stroke="#fff" stroke-width="1.4"/><path d="M30 60.4 H37 M33.5 57.4 V60.4" stroke="#fff" stroke-width="1.4"/><rect x="24.4" y="45" width="4" height="6.6" fill="#fff"/><path d="M26.4 51.6 V56 H28" stroke="#fff" stroke-width="1" fill="none"/>
<path d="M3 73.4 H6 L10 69.4 V83 L6 79 H3Z" fill="#fff"/><path d="M12 73.6 Q13.6 76.2 12 78.8" stroke="#fff" stroke-width="1" fill="none" opacity=".9"/><path d="M14 72 Q16.6 76.2 14 80.4" stroke="#fff" stroke-width="1" fill="none" opacity=".65"/><path d="M16 70.6 Q19.4 76.2 16 81.8" stroke="#fff" stroke-width="1" fill="none" opacity=".4"/></svg>
<div class="abs" style="left:1145px;top:632px;width:55px;text-align:center;color:#fff;font-size:11px;line-height:16px;white-space:nowrap">1:45</div>
<div class="abs" style="left:1145px;top:648px;width:55px;text-align:center;color:#fff;font-size:10.6px;line-height:16px;white-space:nowrap;letter-spacing:-.1px">18.12.2014</div>
<div class="abs" style="left:1146px;top:664px;width:54px;height:8px;background:linear-gradient(180deg,#a8bad6,#8298bc);border-top:1px solid #c4d0e4;border-left:1px solid #b0c0da"></div>
<!--/TB-->
<!--TM-->
<div id="tm" class="abs"></div>
<div id="tmGlow" class="abs"></div>
<svg id="tmIcon" class="abs" viewBox="0 0 14 13"><rect x="1" y="0.5" width="11" height="8.5" rx="1" fill="#cfd6d2"/><rect x="2.2" y="1.6" width="8.6" height="6" fill="#1d7a2a"/><path d="M3 6 L5 4 L6.5 5 L8 3 L10 4.5" stroke="#7be07a" stroke-width=".8" fill="none"/><rect x="4.5" y="9" width="4" height="1.6" fill="#b9c0c4"/><rect x="2.5" y="10.6" width="8" height="1.6" rx=".6" fill="#dfe4e6"/></svg>
<div id="tmTitle" class="abs">Диспетчер задач Windows</div>
<div id="capMin" class="abs cap"></div>
<div id="capMax" class="abs cap"></div>
<div id="capClose" class="abs cap"></div>
<svg class="abs" style="left:714px;top:92px" width="96" height="18" viewBox="0 0 96 18"><rect x="8" y="10.5" width="11" height="3" fill="#fff" stroke="#3a3d40" stroke-width=".6"/><rect x="32.5" y="4.5" width="11" height="8" fill="none" stroke="#fff" stroke-width="2.2"/><path d="M69.6 4.6 L77.6 12.2 M77.6 4.6 L69.6 12.2" stroke="#fff" stroke-width="2.3" stroke-linecap="butt"/></svg>
<div id="tmClient" class="abs"></div>
<div id="tmMenu" class="abs"><span style="left:5px">Файл</span><span style="left:43px">Параметры</span><span style="left:114px">Вид</span><span style="left:144px">Справка</span></div>
<div id="tmPanel" class="abs"></div>
<div class="abs tab" style="left:244px;width:64px">Приложения</div>
<div class="abs tab act" style="left:307px;width:56px">Процессы</div>
<div class="abs tab" style="left:362px;width:43px;padding-left:3px">Службы</div>
<div class="abs tab" style="left:404px;width:83px">Быстродействие</div>
<div class="abs tab" style="left:486px;width:37px">Сеть</div>
<div class="abs tab" style="left:522px;width:72px">Пользователи</div>
<div id="list" class="abs"></div>
<div id="hdr" class="abs"><span style="left:5px">Имя образа</span><span style="left:152px;z-index:2">Польз...</span><span style="left:202.5px">ЦП</span><span style="left:227px">Память...</span><span style="left:277px">Описание</span></div>
<div id="hdrSort" class="abs"></div>
<svg class="abs" style="left:426px;top:175px" width="5.5" height="3.2" viewBox="0 0 7 4"><path d="M0.3 0.3 L6.7 0.3 L3.5 3.3 Z" fill="#a9d4e8" stroke="#7bb8d4" stroke-width=".5"/></svg>
<div class="abs hsep" style="left:478px"></div><div class="abs hsep" style="left:530px"></div><div class="abs hsep" style="left:585px"></div>
<div class="abs csep" style="left:406px"></div><div class="abs csep" style="left:454px"></div><div class="abs csep" style="left:478px"></div><div class="abs csep" style="left:530px"></div><div class="abs csep" style="left:585px"></div>
<div id="rows" class="abs">
<div class="row"><span class="c1">AutoDect.exe<span class="w"> *32</span></span><span class="c2">Люба</span><span class="c3">00</span><span class="c4">1 204 КБ</span><span class="c5" style="letter-spacing:-0.10px">AutoDect</span></div>
<div class="row"><span class="c1" style="letter-spacing:0.08px">2GISTrayNotifier.exe<span class="w"> *32</span></span><span class="c2">Люба</span><span class="c3">00</span><span class="c4">3 764 КБ</span><span class="c5">Модуль ...</span></div>
<div class="row"><span class="c1" style="letter-spacing:-0.05px">DivXUpdate.exe<span class="w"> *32</span></span><span class="c2">Люба</span><span class="c3">00</span><span class="c4">13 612 ...</span><span class="c5" style="letter-spacing:-0.07px">DivX Up...</span></div>
<div class="row"><span class="c1">Hotkey.exe<span class="w"> *32</span></span><span class="c2">Люба</span><span class="c3">00</span><span class="c4">13 060 ...</span><span class="c5">HotKey</span></div>
<div class="row"><span class="c1" style="letter-spacing:0.14px">nvtray.exe</span><span class="c2">Люба</span><span class="c3">00</span><span class="c4">7 780 КБ</span><span class="c5">NVIDIA ...</span></div>
<div class="row"><span class="c1">iusb3mon.exe<span class="w"> *32</span></span><span class="c2">Люба</span><span class="c3">00</span><span class="c4">2 324 КБ</span><span class="c5">iusb3mon</span></div>
<div class="row"><span class="c1" style="letter-spacing:-0.04px">HWMonitor_x64_RUS_1.23.exe</span><span class="c2">Люба</span><span class="c3">00</span><span class="c4">4 864 КБ</span><span class="c5">HWMoni...</span></div>
<div class="row"><span class="c1" style="letter-spacing:-0.11px">YandexDisk.exe</span><span class="c2">Люба</span><span class="c3">00</span><span class="c4">11 444 ...</span><span class="c5">Яндекс....</span></div>
<div class="row"><span class="c1" style="letter-spacing:0.12px">BrowserManager.exe<span class="w"> *32</span></span><span class="c2">Люба</span><span class="c3">00</span><span class="c4">7 840 КБ</span><span class="c5" style="letter-spacing:0.16px">Browser...</span></div>
<div class="row"><span class="c1" style="letter-spacing:0.10px">sidebar.exe</span><span class="c2">Люба</span><span class="c3">00</span><span class="c4">42 404 ...</span><span class="c5" style="letter-spacing:0.39px">Гаджет...</span></div>
<div class="row"><span class="c1">avpui.exe<span class="w"> *32</span></span><span class="c2">Люба</span><span class="c3">00</span><span class="c4">2 008 КБ</span><span class="c5">Kaspers...</span></div>
<div class="row"><span class="c1">igfxsrvc.exe</span><span class="c2">Люба</span><span class="c3">00</span><span class="c4">3 940 КБ</span><span class="c5" style="letter-spacing:0.09px">igfxsrvc ...</span></div>
<div class="row"><span class="c1" style="letter-spacing:-0.25px">CECAPLF.exe<span class="w"> *32</span></span><span class="c2">Люба</span><span class="c3">00</span><span class="c4">2 512 КБ</span><span class="c5">Chicony ...</span></div>
<div class="row"><span class="c1" style="letter-spacing:0.14px">explorer.exe</span><span class="c2">Люба</span><span class="c3">00</span><span class="c4">42 384 ...</span><span class="c5">Провод...</span></div>
<div class="row"><span class="c1" style="letter-spacing:-0.23px">GPU-Z.exe<span class="w"> *32</span></span><span class="c2">Люба</span><span class="c3">00</span><span class="c4">13 280 ...</span><span class="c5" style="letter-spacing:-0.12px">GPU-Z - ...</span></div>
<div class="row"><span class="c1" style="letter-spacing:0.14px">dwm.exe</span><span class="c2">Люба</span><span class="c3">00</span><span class="c4">15 000 ...</span><span class="c5" style="letter-spacing:0.24px">Диспет...</span></div>
<div class="row"><span class="c1" style="letter-spacing:-0.15px">VDeck.exe</span><span class="c2">Люба</span><span class="c3">00</span><span class="c4">2 592 КБ</span><span class="c5">VIA HD ...</span></div>
<div class="row"><span class="c1">taskhost.exe</span><span class="c2">Люба</span><span class="c3">00</span><span class="c4">5 620 КБ</span><span class="c5" style="letter-spacing:0.12px">Хост-пр...</span></div>
<div class="row sel"><span class="c1" style="letter-spacing:0.15px">igfxtray.exe</span><span class="c2">Люба</span><span class="c3">00</span><span class="c4">2 960 КБ</span><span class="c5" style="letter-spacing:0.24px">igfxTray...</span></div>
<div class="row"><span class="c1" style="letter-spacing:0.15px">plugin-container.exe<span class="w"> *32</span></span><span class="c2">Люба</span><span class="c3">00</span><span class="c4">4 540 КБ</span><span class="c5">Plugin C...</span></div>
<div class="row"><span class="c1">hkcmd.exe</span><span class="c2">Люба</span><span class="c3">00</span><span class="c4">3 368 КБ</span><span class="c5">hkcmd ...</span></div>
<div class="row"><span class="c1">igfxpers.exe</span><span class="c2">Люба</span><span class="c3">00</span><span class="c4">3 760 КБ</span><span class="c5" style="letter-spacing:0.12px">persiste...</span></div>
<div class="row"><span class="c1" style="letter-spacing:-0.11px">nvvsvc.exe</span><span class="c2"></span><span class="c3">00</span><span class="c4">6 700 КБ</span><span class="c5"></span></div>
<div class="row"><span class="c1" style="letter-spacing:-0.11px">nvxdsync.exe</span><span class="c2"></span><span class="c3">00</span><span class="c4">10 432 ...</span><span class="c5"></span></div>
<div class="row"><span class="c1" style="letter-spacing:0.06px">winlogon.exe</span><span class="c2"></span><span class="c3">00</span><span class="c4">3 752 КБ</span><span class="c5"></span></div>
<div class="row"><span class="c1">csrss.exe</span><span class="c2"></span><span class="c3">00</span><span class="c4">2 568 КБ</span><span class="c5"></span></div>
</div>
<div id="sb" class="abs"></div>
<div id="sbThumb" class="abs"></div>
<svg class="abs" style="left:776px;top:174px" width="15" height="413" viewBox="0 0 15 413"><path d="M4.3 10.5 L7.5 7 L10.7 10.5 Z" fill="#4a4e55"/><path d="M4.3 401.5 L7.5 405 L10.7 401.5 Z" fill="#4a4e55"/><path d="M4 267.5 H11 M4 269.5 H11 M4 271.5 H11 M4 273.5 H11" stroke="#8a8d92" stroke-width="1"/></svg>
<div class="abs btn" style="left:260px;width:219px"><span style="position:absolute;left:21.5px;top:0">Отображать процессы всех пользователей</span></div>
<svg class="abs" style="left:265px;top:598px" width="13" height="13" viewBox="0 0 13 13"><path d="M6.5 0.5 C4.5 2 2.5 2.3 0.8 2.3 C0.8 7 2.5 10.8 6.5 12.5 C10.5 10.8 12.2 7 12.2 2.3 C10.5 2.3 8.5 2 6.5 0.5Z" fill="#e8eaee" stroke="#8b93a0" stroke-width=".6"/><path d="M6.5 1.5 C5 2.6 3.2 3 1.7 3.1 L1.9 6.5 L6.5 6.5Z" fill="#3d78d6"/><path d="M6.5 1.5 C8 2.6 9.8 3 11.3 3.1 L11.1 6.5 L6.5 6.5Z" fill="#f0c620"/><path d="M1.9 6.5 C2.4 9 4 10.8 6.5 11.8 L6.5 6.5Z" fill="#f0c620"/><path d="M11.1 6.5 C10.6 9 9 10.8 6.5 11.8 L6.5 6.5Z" fill="#3d78d6"/></svg>
<div class="abs btn" style="left:679px;width:113px;text-align:center">Завершить процесс</div>
<div id="status" class="abs"><span style="left:2px">Процессов: 76</span><span style="left:102px">Загрузка ЦП: 0%</span><span style="left:226px">Физическая память: 85%</span></div>
<div class="abs ssep" style="left:336px"></div><div class="abs ssep" style="left:460px"></div><div class="abs ssep" style="left:708px"></div>
<svg class="abs" style="left:798px;top:643px" width="10" height="10" viewBox="0 0 10 10"><g fill="#b8bcc2"><rect x="7" y="1" width="2" height="2"/><rect x="4" y="4" width="2" height="2"/><rect x="7" y="4" width="2" height="2"/><rect x="1" y="7" width="2" height="2"/><rect x="4" y="7" width="2" height="2"/><rect x="7" y="7" width="2" height="2"/></g></svg>
<!--/TM-->
</body>
</html>
